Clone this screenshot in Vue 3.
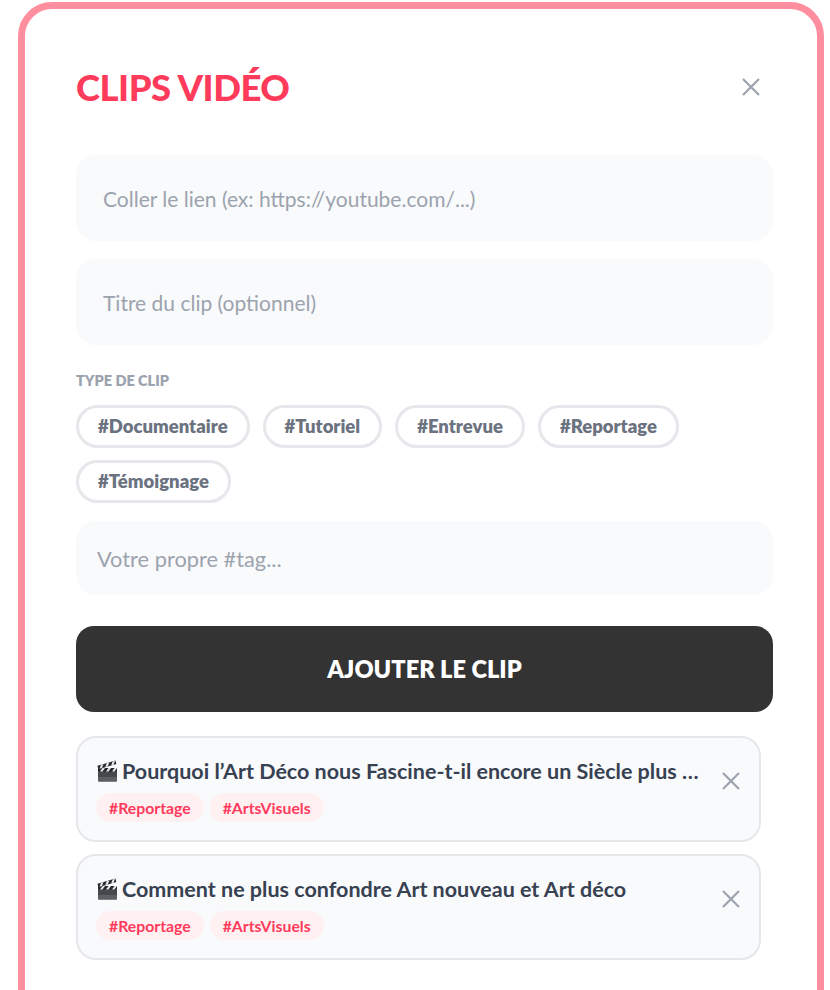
<script setup>
const chips = ['#Documentaire', '#Tutoriel', '#Entrevue', '#Reportage', '#Témoignage']
const clips = [
  { title: 'Pourquoi l’Art Déco nous Fascine-t-il encore un Siècle plus tard et pourquoi', tags: ['#Reportage', '#ArtsVisuels'] },
  { title: 'Comment ne plus confondre Art nouveau et Art déco', tags: ['#Reportage', '#ArtsVisuels'] },
]
</script>

<template>
  <div class="modal">
    <div class="head">
      <h2 class="title">CLIPS VIDÉO</h2>
      <button class="close">
        <svg width="20" height="20" viewBox="0 0 20 20"><path d="M2 2 L18 18 M18 2 L2 18" /></svg>
      </button>
    </div>

    <input class="field" placeholder="Coller le lien (ex: https://youtube.com/...)" />
    <input class="field second" placeholder="Titre du clip (optionnel)" />

    <div class="label">TYPE DE CLIP</div>
    <div class="chips">
      <span v-for="c in chips" :key="c" class="chip">{{ c }}</span>
    </div>

    <input class="field custom" placeholder="Votre propre #tag..." />

    <button class="add">AJOUTER LE CLIP</button>

    <div class="list">
      <div v-for="clip in clips" :key="clip.title" class="item">
        <div class="item-body">
          <div class="item-title">
            <svg class="clap" viewBox="0 0 22 22">
              <!-- corps -->
              <rect x="2" y="11" width="19" height="10.5" rx="1" fill="#45484c" />
              <rect x="2" y="17" width="19" height="4.5" rx="1" fill="#5c6065" />
              <!-- barre fixe -->
              <rect x="2" y="8" width="19" height="3.6" fill="#26282b" />
              <path d="M4 11.6 L6.5 8 H9 L6.5 11.6 Z M10 11.6 L12.5 8 H15 L12.5 11.6 Z M16 11.6 L18.5 8 H21 L18.5 11.6 Z" fill="#e8eaec" />
              <!-- clap -->
              <path d="M1.4 5.8 L19.4 .6 L20.4 4 L2.4 9.2 Z" fill="#2b2d30" />
              <path d="M3.6 8.8 L5 4.8 L7.4 4.1 L6 8.1 Z M9.4 7.1 L10.8 3.1 L13.2 2.4 L11.8 6.4 Z M15.2 5.4 L16.6 1.4 L19 .8 L17.6 4.7 Z" fill="#e8eaec" />
            </svg>
            <span class="item-text">{{ clip.title }}</span>
          </div>
          <div class="tags">
            <span v-for="t in clip.tags" :key="t" class="tag">{{ t }}</span>
          </div>
        </div>
        <button class="remove">
          <svg width="20" height="20" viewBox="0 0 20 20"><path d="M2 2 L18 18 M18 2 L2 18" /></svg>
        </button>
      </div>
    </div>
  </div>
</template>

<style>
html, body { margin: 0; height: 990px; overflow: hidden; background: #fff; }
</style>

<style scoped>
.modal {
  box-sizing: border-box;
  width: 806px;
  height: 1040px;
  margin: 2px 0 0 18px;
  padding: 55px 44px 0 51px;
  background: #fff;
  border: 7px solid #ff8e9e;
  border-radius: 34px;
  font-family: Lato, "Noto Sans", sans-serif;
}

/* entête */
.head {
  display: flex;
  align-items: center;
  justify-content: space-between;
  height: 46px;
  margin-bottom: 45px;
  padding-right: 12px;
}
.title {
  margin: 0;
  font-size: 36.5px;
  font-weight: 900;
  color: #ff3b5c;
  letter-spacing: -0.5px;
}
.close, .remove {
  display: flex;
  padding: 0;
  border: 0;
  background: none;
}
.close path, .remove path {
  fill: none;
  stroke: #9ca3af;
  stroke-width: 2.2;
}

/* champs */
.field {
  display: block;
  box-sizing: border-box;
  width: 100%;
  height: 86px;
  padding: 0 27px;
  border: 0;
  border-radius: 20px;
  outline: none;
  background: #f9fafb;
  font-family: inherit;
  font-size: 21px;
}
.field::placeholder { color: #9ca3af; opacity: 1; }
.second { margin-top: 18px; }
.custom {
  height: 74px;
  margin-top: 18px;
  padding: 0 21px;
  font-size: 21.8px;
}

.label {
  margin-top: 28px;
  font-size: 14.5px;
  line-height: 16px;
  font-weight: 800;
  color: #9ca3af;
}

.chips {
  display: flex;
  flex-wrap: wrap;
  gap: 12px 13px;
  margin-top: 16px;
}
.chip {
  box-sizing: border-box;
  height: 43px;
  padding: 0 19px;
  border: 3px solid #e5e7eb;
  border-radius: 22px;
  font-size: 18.5px;
  line-height: 37px;
  font-weight: 800;
  color: #6b7280;
}

.add {
  display: block;
  width: 100%;
  height: 86px;
  margin-top: 31px;
  border: 0;
  border-radius: 18px;
  background: #333;
  color: #fff;
  font-family: inherit;
  font-size: 23.6px;
  font-weight: 800;
}

/* liste des clips */
.list {
  display: flex;
  flex-direction: column;
  gap: 12px;
  margin-top: 24px;
  padding-right: 12px;
}
.item {
  box-sizing: border-box;
  display: flex;
  align-items: flex-start;
  gap: 18px;
  height: 106px;
  padding: 21px 18px 0 18px;
  background: #f9fafb;
  border: 2px solid #e5e7eb;
  border-radius: 20px;
}
.item-body { flex: 1; min-width: 0; }
.item-title {
  display: flex;
  align-items: center;
  gap: 4px;
  height: 24px;
  font-size: 21.5px;
  font-weight: 700;
  color: #374151;
}
.clap { flex: none; width: 22px; height: 22px; }
.item-text {
  overflow: hidden;
  white-space: nowrap;
  text-overflow: ellipsis;
}
.tags {
  display: flex;
  gap: 6px;
  margin-top: 10px;
}
.tag {
  height: 29px;
  padding: 0 13px;
  border-radius: 15px;
  background: #fff1f2;
  color: #ff3b5c;
  font-size: 15.8px;
  line-height: 29px;
  font-weight: 700;
}
.remove { margin-top: 12px; }
</style>
